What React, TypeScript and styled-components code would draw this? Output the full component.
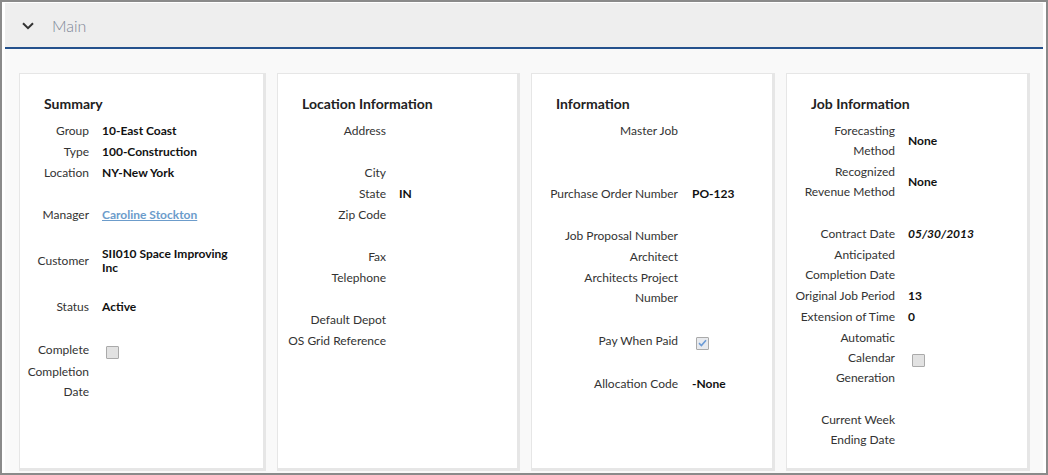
import React from "react";
import styled, { createGlobalStyle } from "styled-components";

const GlobalStyle = createGlobalStyle`
  html, body {
    margin: 0;
    padding: 0;
    background: #ffffff;
  }
  body {
    font-family: Lato, "Open Sans", "Liberation Sans", sans-serif;
    color: #333333;
  }
  * {
    box-sizing: border-box;
  }
`;

const Frame = styled.div`
  width: 1048px;
  height: 475px;
  border: 2px solid #8a8a8a;
  padding: 1px 3px 0 3px;
  display: flex;
  flex-direction: column;
  background: #ffffff;
  overflow: hidden;
`;

const Header = styled.div`
  height: 46px;
  flex: 0 0 auto;
  background: #eeeeee;
  border-bottom: 2px solid #24518c;
  display: flex;
  align-items: center;
  padding-left: 17px;
  gap: 18px;
`;

const Chevron = styled.svg`
  width: 12px;
  height: 8px;
  margin-top: 1px;
`;

const HeaderTitle = styled.span`
  font-size: 16px;
  font-weight: 300;
  color: #7d8696;
`;

const Content = styled.div`
  flex: 1 1 auto;
  background: #f9f9f9;
  padding: 24px 13px 2px 14px;
  display: grid;
  grid-template-columns: 247px 243px 244px 244px;
  column-gap: 11px;
`;

const Card = styled.section`
  background: #ffffff;
  border: 1px solid #e6e6e6;
  border-right-width: 3px;
  border-bottom-width: 3px;
  padding: 21px 24px 0 0;
`;

const CardTitle = styled.h3`
  margin: 0 0 8px 0;
  padding-left: 24px;
  font-size: 14px;
  font-weight: 700;
  line-height: 17px;
  color: #222222;
`;

const Row = styled.div<{ $labelEnd: number; $gap: number; $tall?: boolean }>`
  display: grid;
  grid-template-columns: ${(p) => p.$labelEnd}px 1fr;
  column-gap: ${(p) => p.$gap}px;
  align-items: center;
  padding: 0.5px 0;
  min-height: ${(p) => (p.$tall ? 23 : 21)}px;
`;

const Label = styled.div<{ $max: number }>`
  justify-self: end;
  max-width: ${(p) => p.$max}px;
  text-align: right;
  font-size: 12px;
  line-height: 20px;
  color: #333333;
`;

const Value = styled.div<{ $italic?: boolean }>`
  font-size: 12px;
  line-height: 14px;
  font-weight: 700;
  color: #111111;
  font-style: ${(p) => (p.$italic ? "italic" : "normal")};
`;

const ManagerLink = styled.a`
  color: #6c9ccb;
  text-decoration: underline;
  font-weight: 700;
  cursor: pointer;
`;

const Spacer = styled.div`
  height: 21px;
`;

const CheckBox = styled.span<{ $on?: boolean }>`
  display: inline-flex;
  align-items: center;
  justify-content: center;
  width: 13px;
  height: 13px;
  margin-left: 4px;
  margin-top: 1px;
  border: 1px solid #aaaaaa;
  border-radius: 1px;
  background: ${(p) => (p.$on ? "#e8eaee" : "#e2e2e2")};
  vertical-align: middle;

  svg {
    width: 9px;
    height: 8px;
  }
`;

type Item =
  | { kind: "gap" }
  | {
      kind: "field";
      label: string;
      value?: React.ReactNode;
      italic?: boolean;
      check?: "on" | "off";
    };

type CardData = {
  title: string;
  labelEnd: number;
  labelWidth: number;
  gap: number;
  items: Item[];
};

const gap: Item = { kind: "gap" };
const field = (label: string, value?: React.ReactNode, italic?: boolean): Item => ({
  kind: "field",
  label,
  value,
  italic,
});
const check = (label: string, on: boolean): Item => ({
  kind: "field",
  label,
  check: on ? "on" : "off",
});

const cards: CardData[] = [
  {
    title: "Summary",
    labelEnd: 69,
    labelWidth: 64,
    gap: 13,
    items: [
      field("Group", "10-East Coast"),
      field("Type", "100-Construction"),
      field("Location", "NY-New York"),
      gap,
      field("Manager", <ManagerLink>Caroline Stockton</ManagerLink>),
      gap,
      field("Customer", "SII010 Space Improving Inc"),
      gap,
      field("Status", "Active"),
      gap,
      check("Complete", false),
      field("Completion Date"),
    ],
  },
  {
    title: "Location Information",
    labelEnd: 108,
    labelWidth: 106,
    gap: 13,
    items: [
      field("Address"),
      gap,
      field("City"),
      field("State", "IN"),
      field("Zip Code"),
      gap,
      field("Fax"),
      field("Telephone"),
      gap,
      field("Default Depot"),
      field("OS Grid Reference"),
    ],
  },
  {
    title: "Information",
    labelEnd: 146,
    labelWidth: 134,
    gap: 14,
    items: [
      field("Master Job"),
      gap,
      gap,
      field("Purchase Order Number", "PO-123"),
      gap,
      field("Job Proposal Number"),
      field("Architect"),
      field("Architects Project Number"),
      gap,
      check("Pay When Paid", true),
      gap,
      field("Allocation Code", "-None"),
    ],
  },
  {
    title: "Job Information",
    labelEnd: 108,
    labelWidth: 101,
    gap: 13,
    items: [
      field("Forecasting Method", "None"),
      field("Recognized Revenue Method", "None"),
      gap,
      field("Contract Date", "05/30/2013", true),
      field("Anticipated Completion Date"),
      field("Original Job Period", "13"),
      field("Extension of Time", "0"),
      check("Automatic Calendar Generation", false),
      gap,
      field("Current Week Ending Date"),
    ],
  },
];

const Tick = () => (
  <svg viewBox="0 0 9 8" aria-hidden="true">
    <path d="M1 4.2 L3.4 6.5 L8 1.2" fill="none" stroke="#6b9bd6" strokeWidth="1.6" />
  </svg>
);

const FormCard = ({ data }: { data: CardData }) => (
  <Card>
    <CardTitle>{data.title}</CardTitle>
    {data.items.map((item, i) => {
      if (item.kind === "gap") return <Spacer key={i} />;
      return (
        <Row key={i} $labelEnd={data.labelEnd} $gap={data.gap} $tall={!!item.check}>
          <Label $max={data.labelWidth}>{item.label}</Label>
          {item.check ? (
            <div>
              <CheckBox $on={item.check === "on"}>{item.check === "on" && <Tick />}</CheckBox>
            </div>
          ) : (
            <Value $italic={item.italic}>{item.value}</Value>
          )}
        </Row>
      );
    })}
  </Card>
);

const App = () => {
  return (
    <>
      <GlobalStyle />
      <Frame>
        <Header>
          <Chevron viewBox="0 0 12 8" aria-hidden="true">
            <path d="M1 1.2 L6 6.2 L11 1.2" fill="none" stroke="#333333" strokeWidth="2" />
          </Chevron>
          <HeaderTitle>Main</HeaderTitle>
        </Header>
        <Content>
          {cards.map((c) => (
            <FormCard key={c.title} data={c} />
          ))}
        </Content>
      </Frame>
    </>
  );
};

export default App;
